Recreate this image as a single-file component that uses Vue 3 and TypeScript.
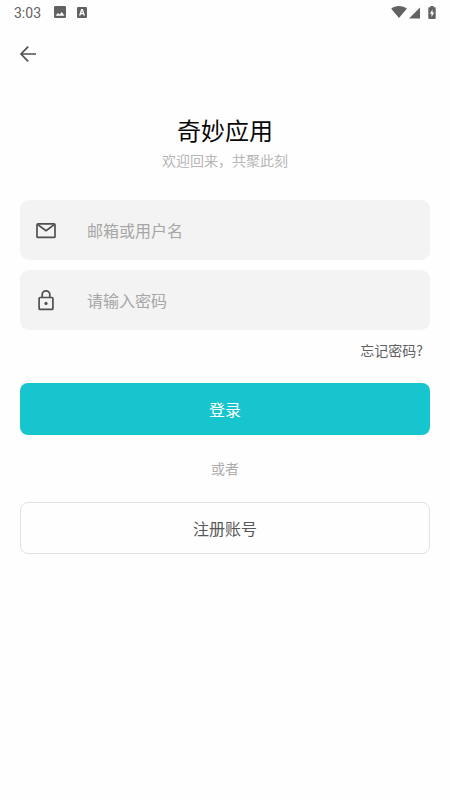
<script setup lang="ts">
import { ref } from 'vue'

const account = ref<string>('')
const password = ref<string>('')
</script>

<template>
  <div class="screen">
    <header class="status">
      <span class="time">3:03</span>
      <svg class="photo" viewBox="0 0 12 12">
        <path fill-rule="evenodd" d="M1.2 0h9.6A1.2 1.2 0 0 1 12 1.200v9.600A1.200 1.200 0 0 1 10.800 12H1.200A1.200 1.200 0 0 1 0 10.800V1.200A1.200 1.200 0 0 1 1.200 0zM1.500 9.700h9L7.800 5.900 5.600 8.600 4 6.900z" />
      </svg>
      <svg class="letter" viewBox="0 0 10 11">
        <path fill-rule="evenodd" d="M1 0h8a1 1 0 0 1 1 1v9a1 1 0 0 1-1 1H1a1 1 0 0 1-1-1V1a1 1 0 0 1 1-1zM4.200 2L2 8.500h1.500l.4-1.300h2.200l.4 1.300H8L5.800 2zM5 3.700l.7 2.300H4.300z" />
      </svg>
      <span class="spacer"></span>
      <svg class="wifi" viewBox="0 0 16 12">
        <path d="M8 12L.2 2.700C2.300 1 5 0 8 0s5.700 1 7.800 2.700z" />
      </svg>
      <svg class="signal" viewBox="0 0 12 12"><path d="M0 12L12 0v12z" /></svg>
      <svg class="battery" viewBox="0 0 8 13">
        <path fill-rule="evenodd" d="M2.300 0h3.400v1.300h1.100A1 1 0 0 1 7.700 2.300v9.700a1 1 0 0 1-1 1H1.300a1 1 0 0 1-1-1V2.300a1 1 0 0 1 1-1h1zM4.500 3.200L1.900 7.700h1.600v3.400l2.700-4.700H4.500z" />
      </svg>
    </header>

    <nav class="nav">
      <button class="back" type="button" aria-label="返回">
        <svg class="line" viewBox="0 0 24 24"><path d="M20 12H5M12.200 4.600L4.900 12l7.300 7.400" /></svg>
      </button>
    </nav>

    <main class="content">
      <h1>奇妙应用</h1>
      <p class="subtitle">欢迎回来，共聚此刻</p>

      <form class="form" @submit.prevent>
        <label class="field">
          <svg class="line" viewBox="0 0 22 22">
            <rect x="2" y="4.800" width="18" height="13.600" rx="1" />
            <path d="M2.500 5.400L11 11.700l8.500-6.300" />
          </svg>
          <input v-model="account" type="text" placeholder="邮箱或用户名" />
        </label>
        <label class="field">
          <svg class="line" viewBox="0 0 22 22">
            <rect x="4.100" y="8.500" width="13.800" height="11.900" rx="1" />
            <path d="M7.200 8.500V5.600a3.800 3.800 0 0 1 7.600 0v2.900" />
            <circle class="dot" cx="11" cy="14.400" r="1.600" />
          </svg>
          <input v-model="password" type="password" placeholder="请输入密码" />
        </label>
        <a class="forgot">忘记密码?</a>
        <button class="action primary" type="submit">登录</button>
        <p class="or">或者</p>
        <button class="action outline" type="button">注册账号</button>
      </form>
    </main>
  </div>
</template>

<style>
body {
  background: #fefefe;
}
</style>

<style scoped>
.screen {
  box-sizing: border-box;
  height: 800px;
  overflow: hidden;
  background: #fefefe;
  color: #505050;
  font-family: 'Noto Sans CJK SC', sans-serif;
}

svg {
  display: block;
  flex: none;
  fill: currentColor;
}

.line {
  fill: none;
  stroke: currentColor;
  stroke-width: 1.7;
  stroke-linejoin: round;
}

.dot {
  fill: currentColor;
  stroke: none;
}

.status {
  box-sizing: border-box;
  display: flex;
  align-items: center;
  height: 24px;
  padding: 0 14px;
  color: #626262;
}

.time {
  width: 40px;
  padding-top: 2px;
  font: 14px/20px Roboto, sans-serif;
}

.photo {
  width: 12px;
  height: 12px;
}

.letter {
  width: 10px;
  height: 11px;
  margin-left: 11px;
}

.spacer {
  flex: 1;
}

.wifi {
  width: 16px;
  height: 12px;
}

.signal {
  width: 11px;
  height: 12px;
  margin: 1px 8px 0 2.500px;
}

.battery {
  width: 8px;
  height: 13px;
}

.nav {
  display: flex;
  align-items: center;
  height: 60px;
  padding-left: 16px;
}

button {
  font-family: inherit;
}

.back {
  padding: 0;
  border: 0;
  background: none;
  color: #505050;
}

.back svg {
  width: 24px;
  height: 24px;
}

.content {
  padding: 28px 20px 0;
}

h1 {
  margin: 0;
  color: #080808;
  font-size: 24px;
  font-weight: 400;
  line-height: 36px;
  text-align: center;
}

.subtitle {
  margin: 2px 0 0;
  color: #b6b6b6;
  font-size: 14px;
  line-height: 20px;
  text-align: center;
}

.form {
  display: flex;
  flex-direction: column;
  margin-top: 30px;
}

.field {
  box-sizing: border-box;
  display: flex;
  align-items: center;
  height: 60px;
  margin-bottom: 10px;
  padding: 0 15px;
  border-radius: 9px;
  background: #f3f3f3;
}

.field svg {
  width: 22px;
  height: 22px;
}

.field input {
  flex: 1;
  min-width: 0;
  margin-left: 30px;
  padding: 0;
  border: 0;
  outline: 0;
  background: none;
  color: #333;
  font: 16px/24px 'Noto Sans CJK SC', sans-serif;
}

.field input::placeholder {
  color: #a6a6a6;
  opacity: 1;
}

.forgot {
  align-self: flex-end;
  margin-right: 7px;
  color: #626262;
  font-size: 14px;
  line-height: 20px;
}

.action {
  box-sizing: border-box;
  height: 52px;
  padding: 0;
  border: 0;
  border-radius: 8px;
  font-size: 16px;
  line-height: 24px;
}

.primary {
  margin-top: 23px;
  background: #16c5ce;
  color: #fff;
}

.or {
  margin: 23px 0 24px;
  color: #acacac;
  font-size: 14px;
  line-height: 20px;
  text-align: center;
}

.outline {
  border: 1px solid #e2e2e2;
  background: #fefefe;
  color: #585858;
}
</style>
